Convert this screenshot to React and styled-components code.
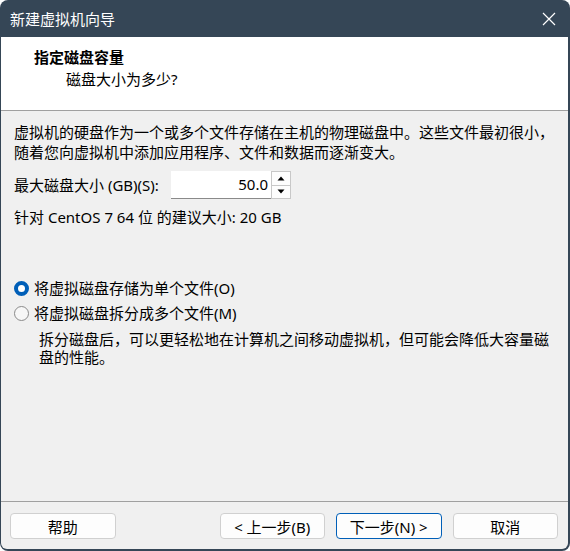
import React from 'react';
import styled, { createGlobalStyle } from 'styled-components';

const GlobalStyle = createGlobalStyle`
  html, body {
    margin: 0;
    padding: 0;
    background: #ffffff;
  }
  * {
    box-sizing: border-box;
  }
`;

const FONT = `"Noto Sans", "Noto Sans CJK SC", sans-serif`;

const Window = styled.div`
  width: 570px;
  height: 551px;
  display: flex;
  flex-direction: column;
  background: #354656;
  border-radius: 8px;
  padding: 0 2px 2px 1px;
  font-family: ${FONT};
  font-size: 15px;
  color: #000000;
  overflow: hidden;
`;

const TitleBar = styled.div`
  height: 37px;
  flex: none;
  display: flex;
  align-items: center;
  justify-content: space-between;
  padding: 0 12px 0 9px;
  color: #ffffff;
`;

const Title = styled.span`
  font-size: 15px;
  line-height: 20px;
`;

const CloseIcon = () => (
  <svg width="14" height="14" viewBox="0 0 14 14">
    <path d="M1 1 L13 13 M13 1 L1 13" stroke="#ffffff" strokeWidth="1.2" fill="none" />
  </svg>
);

const Content = styled.div`
  flex: 1;
  display: flex;
  flex-direction: column;
  background: #f0f0f0;
  border-radius: 0 0 6px 6px;
  overflow: hidden;
`;

const Header = styled.div`
  height: 74px;
  flex: none;
  background: #ffffff;
  border-bottom: 1px solid #a0a0a0;
  padding: 9px 0 0 33px;
`;

const HeaderTitle = styled.div`
  font-weight: bold;
  line-height: 22px;
`;

const HeaderSub = styled.div`
  padding-left: 32px;
  line-height: 22px;
`;

const Body = styled.div`
  flex: 1;
  display: flex;
  flex-direction: column;
  padding: 11px 13px 0 13px;
`;

const Paragraph = styled.div`
  line-height: 20px;
  white-space: nowrap;
`;

const SizeRow = styled.div`
  display: flex;
  align-items: center;
  margin-top: 9px;
  height: 28px;
`;

const SizeLabel = styled.span`
  width: 157px;
  line-height: 20px;
`;

const Spinner = styled.div`
  display: flex;
  height: 28px;
`;

const SpinInput = styled.div`
  width: 100px;
  height: 28px;
  background: #ffffff;
  border-bottom: 1px solid #8a8a8a;
  text-align: right;
  padding-right: 3px;
  line-height: 27px;
`;

const SpinButtons = styled.div`
  width: 20px;
  display: flex;
  flex-direction: column;
  border: 1px solid #c8c8c8;
  background: #fdfdfd;
`;

const SpinButton = styled.div`
  flex: 1;
  display: flex;
  align-items: center;
  justify-content: center;
  border-top: ${(p) => (p.bottom ? '1px solid #c8c8c8' : 'none')};
`;

const Arrow = ({ down }) => (
  <svg width="8" height="5" viewBox="0 0 8 5">
    <path d={down ? 'M0.5 0.5 H7.5 L4 4.5 Z' : 'M0.5 4.5 H7.5 L4 0.5 Z'} fill="#000000" />
  </svg>
);

const Recommend = styled.div`
  margin-top: 8px;
  line-height: 20px;
`;

const RadioGroup = styled.div`
  display: flex;
  flex-direction: column;
  margin-top: 51px;
  gap: 5px;
`;

const RadioRow = styled.label`
  display: flex;
  align-items: center;
  gap: 5px;
  height: 20px;
  line-height: 20px;
`;

const RadioDot = styled.span`
  width: 15px;
  height: 15px;
  border-radius: 50%;
  flex: none;
  background: ${(p) => (p.checked ? '#ffffff' : '#f7f7f7')};
  border: ${(p) => (p.checked ? '4px solid #005fb8' : '1px solid #8a8a8a')};
`;

const RadioNote = styled.div`
  padding-left: 25px;
  margin-top: 7px;
  line-height: 18px;
  white-space: nowrap;
`;

const Footer = styled.div`
  height: 48px;
  flex: none;
  border-top: 1px solid #a0a0a0;
  display: flex;
  align-items: flex-start;
  padding: 11px 10px 0 9px;
`;

const Button = styled.div`
  width: 106px;
  height: 26px;
  display: flex;
  align-items: center;
  justify-content: center;
  background: #fdfdfd;
  border: 1px solid ${(p) => (p.primary ? '#005fb8' : '#d0d0d0')};
  border-radius: 4px;
  margin-left: ${(p) => p.gap || 0}px;
  font-size: 15px;
`;

export default function App() {
  return (
    <>
      <GlobalStyle />
      <Window>
        <TitleBar>
          <Title>新建虚拟机向导</Title>
          <CloseIcon />
        </TitleBar>
        <Content>
          <Header>
            <HeaderTitle>指定磁盘容量</HeaderTitle>
            <HeaderSub>磁盘大小为多少?</HeaderSub>
          </Header>
          <Body>
            <Paragraph>
              虚拟机的硬盘作为一个或多个文件存储在主机的物理磁盘中。这些文件最初很小，
              <br />
              随着您向虚拟机中添加应用程序、文件和数据而逐渐变大。
            </Paragraph>
            <SizeRow>
              <SizeLabel>最大磁盘大小 (GB)(S):</SizeLabel>
              <Spinner>
                <SpinInput>50.0</SpinInput>
                <SpinButtons>
                  <SpinButton><Arrow /></SpinButton>
                  <SpinButton bottom><Arrow down /></SpinButton>
                </SpinButtons>
              </Spinner>
            </SizeRow>
            <Recommend>针对 CentOS 7 64 位 的建议大小: 20 GB</Recommend>
            <RadioGroup>
              <RadioRow>
                <RadioDot checked />
                将虚拟磁盘存储为单个文件(O)
              </RadioRow>
              <RadioRow>
                <RadioDot />
                将虚拟磁盘拆分成多个文件(M)
              </RadioRow>
            </RadioGroup>
            <RadioNote>
              拆分磁盘后，可以更轻松地在计算机之间移动虚拟机，但可能会降低大容量磁
              <br />
              盘的性能。
            </RadioNote>
          </Body>
          <Footer>
            <Button>帮助</Button>
            <Button gap={104}>&lt; 上一步(B)</Button>
            <Button gap={11} primary>下一步(N) &gt;</Button>
            <Button gap={11}>取消</Button>
          </Footer>
        </Content>
      </Window>
    </>
  );
}
